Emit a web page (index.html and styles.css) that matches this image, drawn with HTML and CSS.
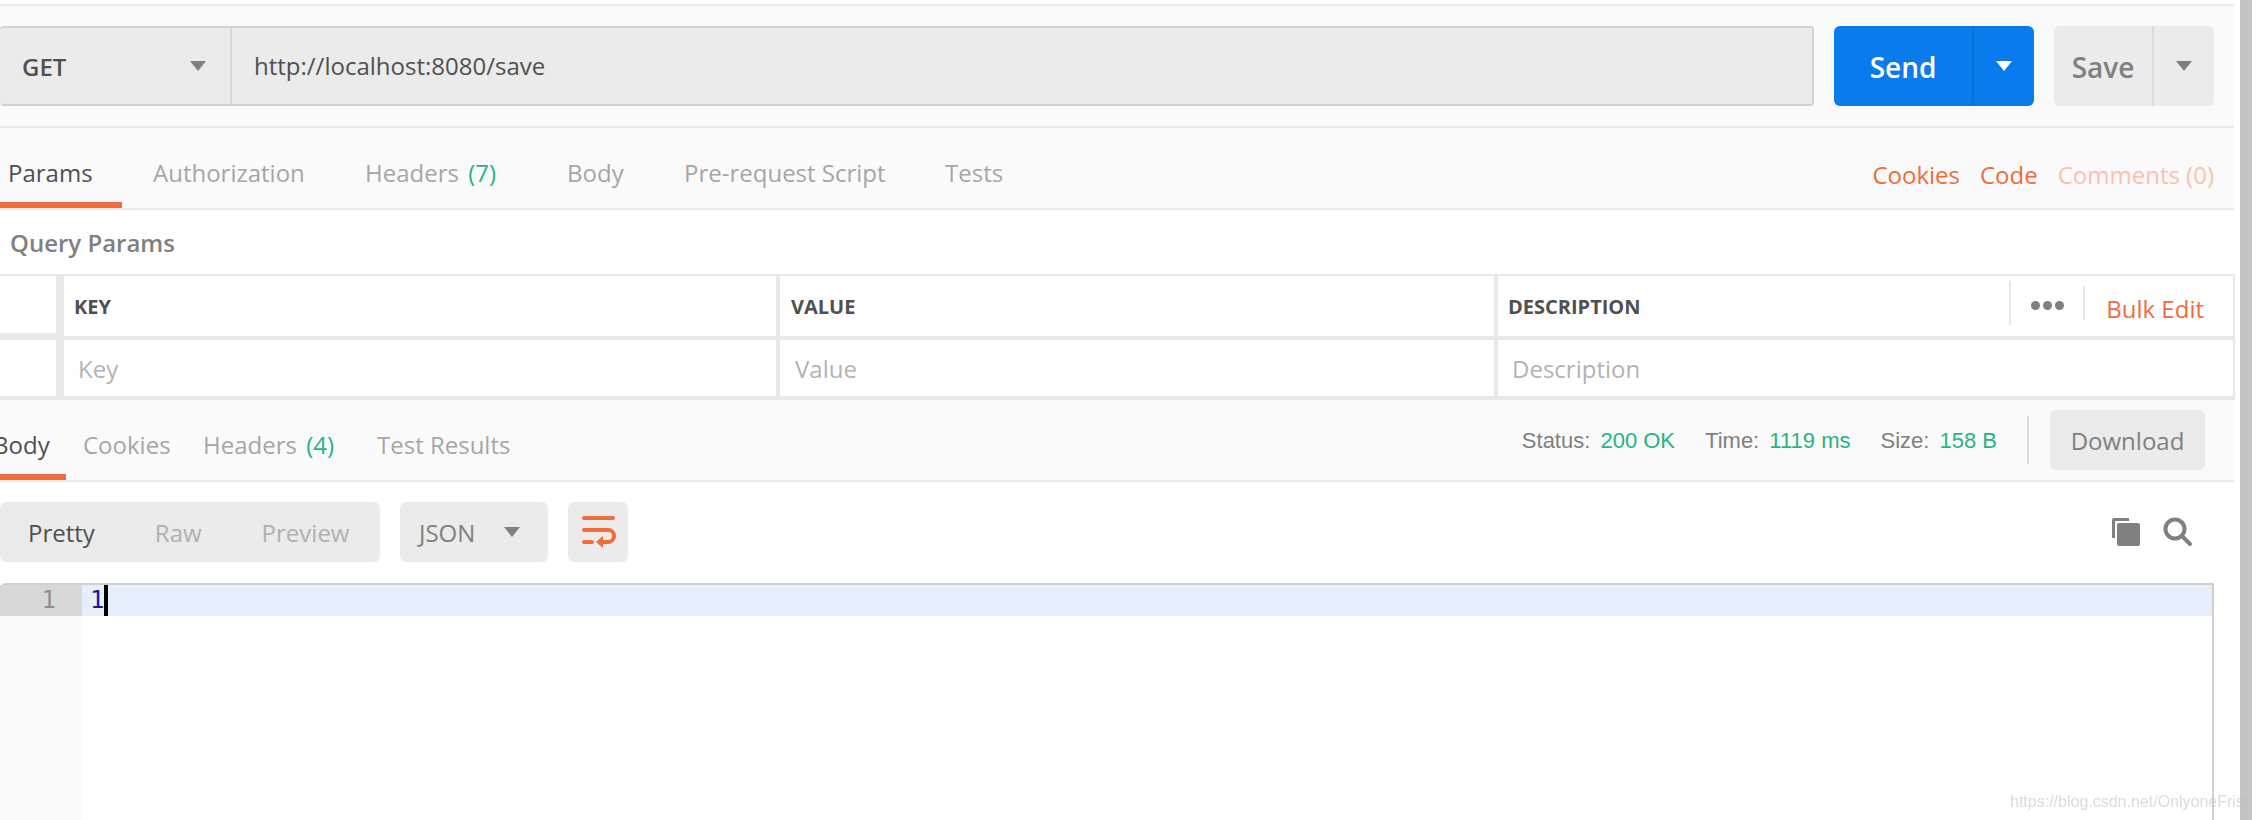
FILE: index.html
```html
<!DOCTYPE html>
<html lang="en">
<head>
<meta charset="utf-8">
<title>Postman request</title>
<link rel="stylesheet" href="styles.css">
</head>
<body>
<div class="app">
  <main class="main">
    <section class="request-area">
      <div class="request-bar">
        <div class="url-group">
          <div class="method">
            <span>GET</span>
            <svg class="caret" viewBox="0 0 16 10"><path d="M0 0h16L8 10z"/></svg>
          </div>
          <div class="url">http://localhost:8080/save</div>
        </div>
        <div class="send">
          <span class="send-label">Send</span>
          <span class="send-drop"><svg class="caret" viewBox="0 0 16 10"><path d="M0 0h16L8 10z"/></svg></span>
        </div>
        <div class="save">
          <span class="save-label">Save</span>
          <span class="save-drop"><svg class="caret" viewBox="0 0 16 10"><path d="M0 0h16L8 10z"/></svg></span>
        </div>
      </div>
    </section>
    <nav class="req-tabs">
      <span class="tab tab-active tab-params">Params</span>
      <span class="tab tab-auth">Authorization</span>
      <span class="tab tab-headers">Headers <em class="count">(7)</em></span>
      <span class="tab tab-body">Body</span>
      <span class="tab tab-pre">Pre-request Script</span>
      <span class="tab tab-tests">Tests</span>
      <span class="req-links">
        <span class="link">Cookies</span>
        <span class="link">Code</span>
        <span class="link link-faded">Comments (0)</span>
      </span>
    </nav>
    <section class="params">
      <h2 class="params-title">Query Params</h2>
      <div class="table">
        <div class="row row-head">
          <div class="cell cell-check"></div>
          <div class="cell cell-key">KEY</div>
          <div class="cell cell-value">VALUE</div>
          <div class="cell cell-desc">
            <span class="desc-label">DESCRIPTION</span>
            <span class="table-tools">
              <span class="dots"><i></i><i></i><i></i></span>
              <span class="bulk">Bulk Edit</span>
            </span>
          </div>
        </div>
        <div class="row row-input">
          <div class="cell cell-check"></div>
          <div class="cell cell-key">Key</div>
          <div class="cell cell-value">Value</div>
          <div class="cell cell-desc">Description</div>
        </div>
      </div>
    </section>
    <nav class="res-tabs">
      <span class="tab tab-active res-body"><span class="res-body-text">Body</span></span>
      <span class="tab res-cookies">Cookies</span>
      <span class="tab res-headers">Headers <em class="count">(4)</em></span>
      <span class="tab res-tests">Test Results</span>
      <span class="res-meta">
        <span class="meta">Status: <b>200 OK</b></span>
        <span class="meta">Time: <b>1119 ms</b></span>
        <span class="meta">Size: <b>158 B</b></span>
        <span class="meta-sep"></span>
        <span class="download">Download</span>
      </span>
    </nav>
    <div class="toolbar">
      <div class="modes">
        <span class="mode mode-on">Pretty</span>
        <span class="mode">Raw</span>
        <span class="mode">Preview</span>
      </div>
      <div class="format">
        <span>JSON</span>
        <svg class="caret" viewBox="0 0 16 10"><path d="M0 0h16L8 10z"/></svg>
      </div>
      <div class="wrap">
        <svg viewBox="0 0 60 60" width="60" height="60">
          <path class="wrap-line" d="M16 16h29M16 28h24a6 6 0 0 1 0 12h-6M16 40h8"/>
          <path class="wrap-head" d="M35 34v12l-7-6z"/>
        </svg>
      </div>
      <div class="tools">
        <svg viewBox="0 0 30 30" width="30" height="30"><path class="tool-fill" d="M2 3a2 2 0 0 1 2-2h15v3H5v17H2z"/><rect class="tool-fill" x="7" y="6" width="23" height="23" rx="2"/></svg>
        <svg viewBox="0 0 30 30" width="30" height="30"><circle class="tool-ring" cx="12" cy="12" r="9.500"/><path class="tool-ring" d="M19 19l8 8"/></svg>
      </div>
    </div>
    <div class="editor">
      <div class="gutter"><div class="gutter-active">1</div></div>
      <div class="code"><div class="code-active"><span class="num">1</span><span class="cursor"></span></div></div>
    </div>
  </main>
  <div class="scrollbar"></div>
</div>
<div class="watermark">https://blog.csdn.net/OnlyoneFrist</div>
</body>
</html>
```
FILE: styles.css
```css
* { box-sizing: border-box; }
html, body { margin: 0; height: 100%; background: #fff; overflow: hidden; }
body { font-family: "Open Sans", "Liberation Sans", sans-serif; font-size: 24px; color: #505050; }
.app { display: flex; height: 820px; }
.main { width: 2234px; display: flex; flex-direction: column; height: 820px; }
.scrollbar { width: 12px; margin-left: 6px; background: #c4c4c4; }

.request-area { margin-top: 4px; background: #fafafa; border-top: 2px solid #e8e8e8; border-bottom: 2px solid #e8e8e8; height: 124px; padding: 20px 20px 0 0; }
.request-bar { display: flex; height: 80px; }
.url-group { width: 1814px; display: flex; background: #ebebeb; border: 2px solid #d2d2d2; border-left: 0; border-radius: 4px; }
.method { width: 232px; display: flex; align-items: center; justify-content: space-between; padding: 0 24px 0 22px; border-right: 2px solid #d8d8d8; font-weight: 600; flex: none; }
.caret { width: 16px; height: 10px; display: block; fill: #808080; }
.url { padding-left: 22px; display: flex; align-items: center; color: #505050; margin-top: -2px; }
.send { width: 200px; margin-left: 20px; background: #097bed; border-radius: 6px; display: flex; color: #fff; font-size: 28px; font-weight: 600; }
.send-label { width: 140px; padding-top: 2px; display: flex; align-items: center; justify-content: center; border-right: 2px solid #0a6fd4; }
.send-drop, .save-drop { flex: 1; display: flex; align-items: center; justify-content: center; }
.send-drop .caret { fill: #fff; }
.save { width: 160px; margin-left: 20px; background: #ebebeb; border-radius: 6px; display: flex; color: #808080; font-size: 28px; font-weight: 600; }
.save-label { width: 100px; padding-top: 2px; display: flex; align-items: center; justify-content: center; border-right: 2px solid #dcdcdc; }

.req-tabs { height: 82px; background: #fafafa; border-bottom: 2px solid #e8e8e8; display: flex; }
.tab { height: 80px; display: block; padding-top: 28px; line-height: 34px; color: #a6a6a6; white-space: nowrap; }
.tab-active { color: #505050; border-bottom: 6px solid #f26b3a; }
.count { font-style: normal; color: #26b47f; margin-left: 3px; }
.tab-params { width: 122px; padding-left: 8px; }
.tab-auth { margin-left: 31px; width: 212px; }
.tab-headers { width: 202px; }
.tab-body { width: 117px; }
.tab-pre { width: 260px; }
.tab-tests { margin-left: 1px; }
.req-links { margin-left: auto; padding: 30px 20px 0 0; display: flex; gap: 20px; line-height: 34px; }
.link { color: #f26b3a; }
.link-faded { color: #fbc1ad; }

.params { height: 190px; display: flex; flex-direction: column; }
.params-title { margin: 0; height: 64px; padding: 17px 0 0 10px; font-size: 24px; line-height: 32px; font-weight: 600; color: #808080; }
.table { border-top: 2px solid #e8e8e8; border-bottom: 4px solid #e8e8e8; border-right: 2px solid #e8e8e8; margin-right: -1px; }
.row { display: grid; grid-template-columns: 64px 716px 718px 1fr; }
.row-head { height: 64px; border-bottom: 4px solid #e8e8e8; font-size: 20px; font-weight: 700; }
.row-input { height: 56px; color: #b3b3b3; }
.cell { border-right: 4px solid #e8e8e8; display: flex; align-items: center; }
.cell-check { border-right-width: 8px; }
.row-head .cell-check { border-bottom: 3px solid #e8e8e8; }
.cell-desc { border-right: 0; }
.row-head .cell-key, .row-head .cell-desc { padding-left: 10px; }
.row-head .cell-value { padding-left: 11px; }
.row-input .cell-key, .row-input .cell-desc { padding-left: 14px; }
.row-input .cell-value { padding-left: 15px; }
.desc-label { flex: none; }
.table-tools { margin-left: auto; height: 44px; display: flex; align-items: center; border-left: 2px solid #e8e8e8; margin-top: -6px; }
.dots { width: 72px; padding-top: 4px; display: flex; justify-content: center; gap: 3px; }
.dots i { width: 9px; height: 9px; border-radius: 50%; background: #808080; }
.bulk { border-left: 2px solid #e8e8e8; height: 34px; padding: 5px 29px 0 21px; color: #f26b3a; font-size: 24px; font-weight: 400; line-height: 36px; }

.res-tabs { height: 82px; background: #fafafa; border-bottom: 2px solid #e8e8e8; display: flex; }
.res-body { width: 66px; overflow: hidden; }
.res-body-text { display: block; margin-left: -7px; }
.res-cookies { margin-left: 17px; width: 120px; }
.res-headers { width: 174px; }
.res-meta { margin-left: auto; display: flex; align-items: center; padding-right: 29px; font-family: "Liberation Sans", Arial, sans-serif; font-size: 22px; color: #808080; }
.meta { margin-right: 30px; padding-top: 2px; }
.meta b { font-weight: 400; color: #26b47f; margin-left: 4px; }
.meta-sep { width: 2px; height: 48px; background: #dcdcdc; margin-right: 21px; }
.download { width: 155px; height: 60px; border-radius: 6px; background: #ebebeb; display: flex; align-items: center; justify-content: center; font-family: "Open Sans", sans-serif; font-size: 24px; }

.toolbar { height: 101px; padding-top: 20px; display: flex; align-items: flex-start; }
.modes { width: 380px; height: 60px; background: #ebebeb; border-radius: 6px; display: flex; align-items: center; padding-left: 28px; gap: 60px; color: #b0b0b0; }
.mode-on { color: #505050; }
.format { width: 148px; height: 60px; margin-left: 20px; background: #ebebeb; border-radius: 6px; display: flex; align-items: center; justify-content: space-between; padding: 0 28px 0 19px; color: #808080; }
.wrap { width: 60px; height: 60px; margin-left: 20px; background: #ebebeb; border-radius: 6px; }
.wrap svg { display: block; }
.wrap-line { fill: none; stroke: #f26b3a; stroke-width: 4; stroke-linecap: round; }
.wrap-head { fill: #f26b3a; }
.tools { margin-left: auto; display: flex; gap: 23px; padding: 15px 41px 0 0; }
.tool-fill { fill: #808080; }
.tool-ring { fill: none; stroke: #808080; stroke-width: 4; stroke-linecap: round; }

.editor { flex: 1; margin-right: 20px; display: flex; border-top: 2px solid #d0d0d0; border-right: 2px solid #d0d0d0; border-top-left-radius: 6px; }
.gutter { width: 82px; background: #f9f9f9; }
.gutter-active { height: 31px; background: #d8d8d8; color: #909090; font-family: "DejaVu Sans Mono", monospace; font-size: 24px; line-height: 31px; text-align: right; padding-right: 26px; }
.code { flex: 1; }
.code-active { height: 31px; background: #e6f0fc; display: flex; padding-left: 8px; font-family: "DejaVu Sans Mono", monospace; font-size: 24px; line-height: 31px; color: #1a1a9a; }
.cursor { width: 4px; height: 31px; background: #000; }

.watermark { position: absolute; left: 2010px; top: 792px; font-family: "Liberation Sans", Arial, sans-serif; font-size: 16px; line-height: 20px; color: rgba(190,190,190,.55); filter: blur(.6px); white-space: nowrap; }
```
